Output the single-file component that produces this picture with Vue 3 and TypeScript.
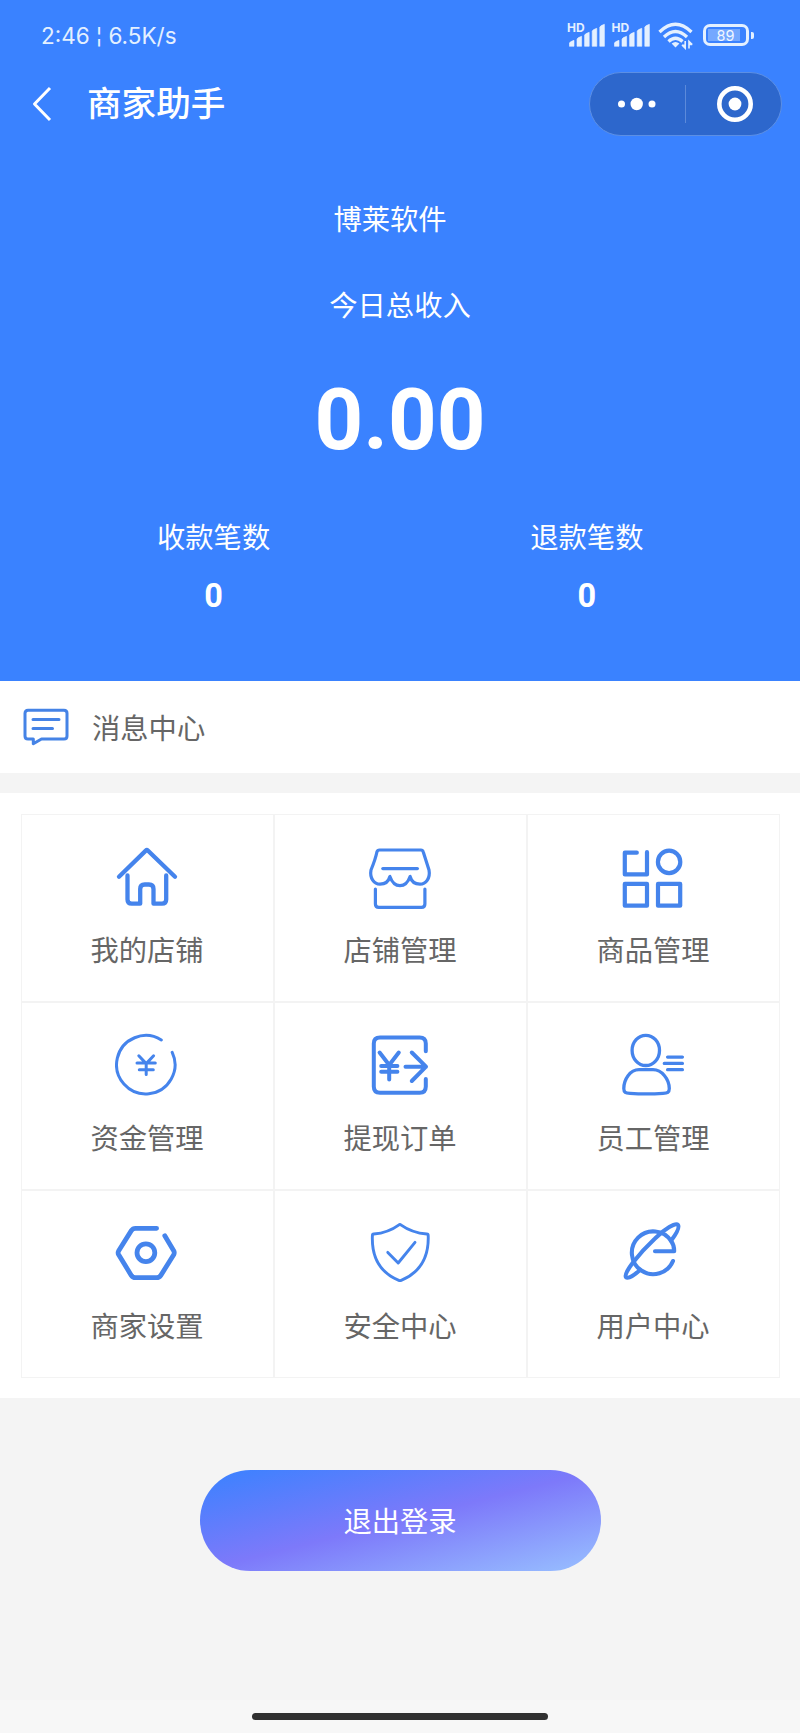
<script setup lang="ts">
interface Stat {
  label: string
  value: number
}

interface MenuItem {
  label: string
  stroke: number
  paths: string[]
}

const stats: Stat[] = [
  { label: '收款笔数', value: 0 },
  { label: '退款笔数', value: 0 },
]

const menu: MenuItem[] = [
  {
    label: '我的店铺',
    stroke: 4.3,
    paths: [
      'M4 31.8L30.8 5.6Q31.8 4.6 32.8 5.6L60 31.8',
      'M12.5 30.5V54.5Q12.5 58.7 16.7 58.7H25.2V44Q25.2 39.5 29.7 39.5H34Q38.5 39.5 38.5 44V58.7H47Q51.2 58.7 51.2 54.5V30.5',
    ],
  },
  {
    label: '店铺管理',
    stroke: 3.2,
    paths: [
      'M11.5 5H53Q54.7 5 55.2 6.8L61 25C62.5 33 58 39.2 52 39.2C46 39.2 43.3 36 42.1 31.5C40 37.5 37 40.7 32 40.7C27 40.7 24 37.5 21.9 31.5C20.7 36 18 39.2 12 39.2C6 39.2 1.5 33 3 25Q7.5 14 8.9 7Q9.5 5 11.5 5Z',
      'M14.8 23.6H49.4',
      'M7.4 44V59Q7.4 62.4 10.8 62.4H53.5Q56.9 62.4 56.9 59V44',
    ],
  },
  {
    label: '商品管理',
    stroke: 4.2,
    paths: [
      'M15.8 7.7H3.8V29.4H26V7.2',
      'M59.3 16.9A11.2 11.2 0 1 1 36.9 16.9A11.2 11.2 0 1 1 59.3 16.9Z',
      'M3.8 38.9H26V60.7H3.8Z',
      'M37 38.9H59.2V60.7H37Z',
    ],
  },
  {
    label: '资金管理',
    stroke: 3,
    paths: [
      'M46.3 7A29.2 29.2 0 1 0 57.2 19.3',
      'M23.8 22.8L31.2 30.6L38.6 22.8M31.2 30.6V41.5M22 30.1H40.3M24.3 36.7H38.3',
    ],
  },
  {
    label: '提现订单',
    stroke: 4,
    paths: [
      'M57.8 18.3V10.5Q57.8 4.4 51.7 4.4H12Q5.8 4.4 5.8 10.5V53.5Q5.8 59.7 12 59.7H51.7Q57.8 59.7 57.8 53.5V46',
      'M37.5 33.7H58M43.8 19.5L58 33.7L43.8 48',
      'M11.6 19.5L21.2 32L30.8 19.5M21.2 32V46.6M13.2 33H29.4M13.2 38.8H29.4',
    ],
  },
  {
    label: '员工管理',
    stroke: 3.3,
    paths: [
      'M38.5 17.4A13.7 15.1 0 1 1 11.1 17.4A13.7 15.1 0 1 1 38.5 17.4Z',
      'M18 36.7H32C41 36.7 48.3 46.5 48.3 55.5C48.3 59.5 46.5 60 42 60.3Q25.5 61.5 9 60.3C4.5 60 2.8 59.5 2.8 55.5C2.8 46.5 9 36.7 18 36.7Z',
      'M46.6 24.1H61.4M43.3 30.4H61.4M46.6 36.7H61.4',
    ],
  },
  {
    label: '商家设置',
    stroke: 4.8,
    paths: [
      'M41.6 7.3H20.5Q17.8 7.3 16.3 9.6L3.7 29.7Q2.5 31.7 3.7 33.8L16.3 54.4Q17.8 56.7 20.5 56.7H41.5Q44.3 56.7 45.8 54.4L58.7 33.8Q59.8 31.7 58.7 29.7L49.8 14.7',
      'M39.8 31.7A8.9 8.9 0 1 1 22 31.7A8.9 8.9 0 1 1 39.8 31.7Z',
    ],
  },
  {
    label: '安全中心',
    stroke: 2.9,
    paths: [
      'M32.4 3.6Q31.9 3.3 31.4 3.6C24 9 16 12.2 5.8 13Q4.4 13.1 4.4 14.6C3.5 36 12 51.5 30.8 59.4Q32 59.9 33.2 59.4C52 51.5 61 36 60.2 14.6Q60.2 13.1 58.8 13C48 12.2 40 9 32.4 3.6Z',
      'M19.8 31.4L30.2 42L47 21.4',
    ],
  },
  {
    label: '用户中心',
    stroke: 4.1,
    paths: [
      'M52 40A21.4 21.4 0 1 1 50 19.8Q53.2 24 53.2 30.2H34',
      'M50 19.8C55.5 12.5 58.8 6.5 57 3.9C54.5 1.5 44 7.5 34 17.5C18 32.5 1.5 53 5 56.2C7 58.2 13.5 54 19 49',
    ],
  },
]

const signalBars: number[] = [6, 10, 14, 18, 22]
</script>

<template>
  <main class="screen">
    <header class="hero">
      <div class="status">
        <span class="clock">2:46 ¦ 6.5K/s</span>
        <div class="indicators">
          <div v-for="sim in 2" :key="sim" class="signal">
            <span class="hd">HD</span>
            <svg width="36" height="24" viewBox="0 0 36 24">
              <path
                v-for="(h, i) in signalBars"
                :key="i"
                :d="`M${0.4 + i * 7.6} 23.3v-${h - 3}q0-1.5 4.6-3v${h}z`"
                fill="#e4f0ff"
                stroke="#e4f0ff"
                stroke-width="0.6"
                stroke-linejoin="round"
              />
            </svg>
          </div>
          <svg class="wifi" width="36" height="28" viewBox="0 0 36 28" fill="none" stroke="#e4f0ff" stroke-width="3.3">
            <path d="M1.5 10Q17.5-5.5 33.5 10" />
            <path d="M6 15Q17.5 4 29 15" />
            <path d="M10.5 19.5Q17.5 13 24.5 19.5" />
            <path d="M13.6 21.5Q17.5 18.5 21.4 21.5L17.5 25.5Z" fill="#e4f0ff" stroke="none" />
            <path d="M24 23.2H27.2V19.5M27.2 19V26.2L24 23M34.2 22.4H31V26.5M31 26.6V19.4L34.2 22.6" stroke-width="1.6" />
          </svg>
          <div class="battery"><span class="level">89</span></div>
        </div>
      </div>

      <nav class="titlebar">
        <svg class="back" width="20" height="36" viewBox="0 0 20 36" fill="none" stroke="#fff" stroke-width="3" stroke-linejoin="round">
          <path d="M18 2L2.5 18L18 34" />
        </svg>
        <h1 class="title">商家助手</h1>
        <div class="capsule">
          <svg class="more" width="40" height="14" viewBox="0 0 40 14" fill="#fff">
            <circle cx="4.5" cy="7" r="3.5" />
            <circle cx="19.7" cy="7" r="6.2" />
            <circle cx="35" cy="7" r="3.5" />
          </svg>
          <i class="split"></i>
          <svg class="close" width="36" height="36" viewBox="0 0 36 36">
            <circle cx="18" cy="18" r="15.7" fill="none" stroke="#fff" stroke-width="4.6" />
            <circle cx="18" cy="18" r="6.4" fill="#fff" />
          </svg>
        </div>
      </nav>

      <p class="company">博莱软件</p>
      <p class="caption">今日总收入</p>
      <p class="amount">0.00</p>
      <div class="stats">
        <div v-for="s in stats" :key="s.label" class="stat">
          <span>{{ s.label }}</span>
          <b>{{ s.value }}</b>
        </div>
      </div>
    </header>

    <section class="message">
      <svg width="46" height="40" viewBox="0 0 46 40" fill="none" stroke="#4583e6" stroke-width="3" stroke-linecap="round" stroke-linejoin="round">
        <path d="M5 3.2H41Q44 3.2 44 6.2V29Q44 32 41 32H18.5L10.3 36.8V32H5Q2 32 2 29V6.2Q2 3.2 5 3.2Z" />
        <path d="M10 12.5H36M10 21.5H29.5" />
      </svg>
      <span>消息中心</span>
    </section>

    <section class="panel">
      <div class="grid">
        <div v-for="m in menu" :key="m.label" class="cell">
          <svg
            width="64"
            height="64"
            viewBox="0 0 64 64"
            fill="none"
            stroke="#4584ec"
            :stroke-width="m.stroke"
            stroke-linecap="round"
            stroke-linejoin="round"
          >
            <path v-for="d in m.paths" :key="d" :d="d" />
          </svg>
          <span>{{ m.label }}</span>
        </div>
      </div>
    </section>

    <section class="actions">
      <button class="logout" type="button">退出登录</button>
    </section>
    <footer class="home"><i></i></footer>
  </main>
</template>

<style>
body {
  margin: 0;
}
</style>

<style scoped>
.screen {
  width: 800px;
  height: 1733px;
  display: flex;
  flex-direction: column;
  overflow: hidden;
  background: #f4f4f4;
  font-family: Roboto, "Noto Sans CJK SC", sans-serif;
  font-size: 28.3px;
  color: #666;
}
svg {
  display: block;
  flex: none;
}
p,
h1 {
  margin: 0;
}
.hero {
  height: 681px;
  background: #3a82ff;
  color: #fff;
}
.status {
  height: 72px;
  box-sizing: border-box;
  padding: 0 51px 0 41px;
  display: flex;
  justify-content: space-between;
}
.clock {
  margin-top: 20px;
  font-family: Inter, sans-serif;
  font-size: 22.5px;
  line-height: 32px;
  color: #e4f0ff;
  white-space: nowrap;
}
.indicators {
  display: flex;
  align-items: flex-start;
}
.signal {
  position: relative;
  width: 36px;
  margin: 23px 8.5px 0 0;
}
.hd {
  position: absolute;
  left: -2px;
  top: -1px;
  font: 700 12px/11px Inter, sans-serif;
  color: #e4f0ff;
}
.wifi {
  margin: 22px 9px 0 0;
}
.battery {
  position: relative;
  box-sizing: border-box;
  width: 46px;
  height: 22px;
  margin: 24px 0 0;
  padding: 2px;
  border: 3px solid #e4f0ff;
  border-radius: 7px;
}
.battery::after {
  content: "";
  position: absolute;
  right: -8px;
  top: 4.5px;
  width: 3px;
  height: 7px;
  border-radius: 0 2px 2px 0;
  background: #e4f0ff;
}
.level {
  display: block;
  width: 32px;
  height: 12px;
  background: #74a8ff;
  font: 400 14.5px/13px Inter, sans-serif;
  text-align: center;
  text-indent: 3px;
  color: #f0f7ff;
}
.titlebar {
  height: 64px;
  padding: 0 18px 0 32px;
  display: flex;
  align-items: center;
}
.title {
  margin-left: 35px;
  flex: 1;
  font-size: 34.6px;
  font-weight: 500;
  line-height: 50px;
}
.capsule {
  box-sizing: border-box;
  width: 193px;
  height: 64px;
  display: flex;
  align-items: center;
  border: 1px solid #5c8fe4;
  border-radius: 32px;
  background: #2d67cc;
}
.more {
  margin-left: 27px;
}
.split {
  width: 1px;
  height: 38px;
  margin-left: 28px;
  background: #5c8ada;
}
.close {
  margin-left: 31px;
}
.company,
.caption {
  line-height: 40px;
  text-align: center;
}
.company {
  margin: 65px 20px 0 0;
}
.caption {
  margin-top: 46px;
}
.amount {
  margin-top: 43px;
  font-size: 85px;
  font-weight: 700;
  line-height: 100px;
  text-align: center;
}
.stats {
  display: flex;
  margin-top: 49px;
  padding: 0 26.5px 0 27px;
}
.stat {
  flex: 1;
  display: flex;
  flex-direction: column;
  align-items: center;
  line-height: 40px;
}
.stat b {
  margin-top: 17px;
  font-size: 32.5px;
}
.message {
  height: 92px;
  display: flex;
  align-items: center;
  padding-left: 23px;
  background: #fff;
}
.message span {
  margin: -2px 0 0 23px;
}
.panel {
  margin-top: 20px;
  height: 605px;
  box-sizing: border-box;
  padding: 21px 20.5px 20px 20.5px;
  background: #fff;
}
.grid {
  display: grid;
  grid-template-columns: repeat(3, 1fr);
  grid-auto-rows: 188px;
}
.cell {
  box-sizing: border-box;
  display: flex;
  flex-direction: column;
  align-items: center;
  padding-top: 30px;
  border: 1px solid #f3f3f3;
}
.cell svg {
  margin-right: 1px;
}
.cell span {
  margin-top: 23px;
  line-height: 40px;
}
.actions {
  flex: 1;
  padding-top: 72px;
}
.logout {
  display: block;
  width: 401px;
  height: 101px;
  margin: 0 auto;
  padding: 0 0 2px;
  border: 0;
  border-radius: 51px;
  background: linear-gradient(to bottom right, #3982ff, #7d79fa 50%, #98c0ff);
  color: #fff;
  font: inherit;
}
.home {
  height: 33px;
  background: #f7f7f7;
}
.home i {
  display: block;
  width: 296px;
  height: 7px;
  margin: 13px auto 0;
  border-radius: 4px;
  background: #303030;
}
</style>
